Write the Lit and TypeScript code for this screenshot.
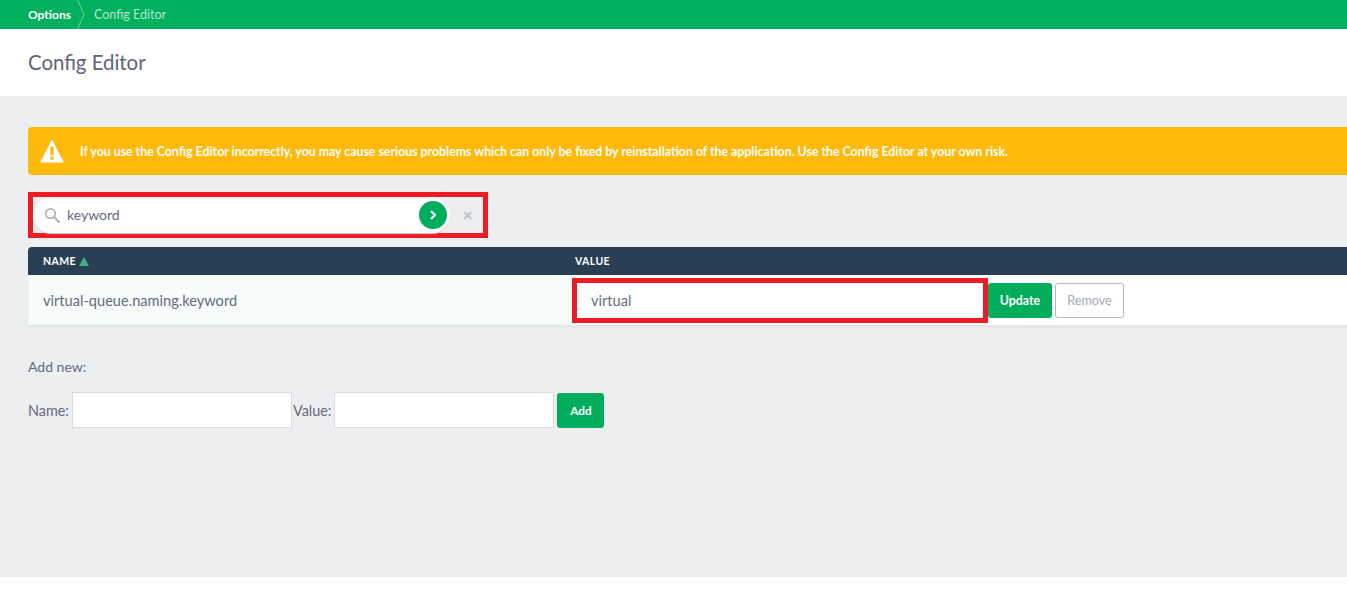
import { LitElement, html, css } from "lit";
import { customElement } from "lit/decorators.js";

@customElement("app-root")
export class AppRoot extends LitElement {
  static styles = css`
    :host { display: block; width: 1347px; height: 602px; overflow: hidden; background: #fff;
      font-family: "Lato", "Noto Sans", sans-serif; color: #676a7f; font-size: 14px; }
    * { box-sizing: border-box; }
    .crumbs { height: 29px; background: #00b05e; display: flex; align-items: center; padding-left: 28px; font-size: 12px; }
    .crumb-active { color: #fff; font-weight: 700; }
    .chev { margin: 0 9px 0 6px; display: block; }
    .crumb { color: #b5e6cb; font-size: 12.5px; }
    .head { height: 67px; display: flex; align-items: center; padding: 0 28px 1px; }
    h1 { margin: 0; font-size: 20.4px; font-weight: 400; color: #5f6478; }
    .body { height: 481px; background: #edeef0; padding: 31px 0 0 28px; }
    .warn { width: 1340px; height: 48px; background: #ffb90a; border-radius: 4px; display: flex; align-items: center;
      padding-left: 12px; color: #fff; font-weight: 700; font-size: 12.33px; gap: 16px; }
    .search-frame { margin-top: 17px; width: 460px; height: 46px; border: 5px solid #ed1c24; display: flex; align-items: center; }
    .search { width: 417px; height: 35px; background: #fff; border-radius: 18px; box-shadow: 0 1px 1px #cfd3d9;
      display: flex; align-items: center; padding: 0 3px 0 11px; font-size: 14px; }
    .search .text { margin-left: 7px; flex: 1; color: #66697f; padding-bottom: 2px; }
    .go { width: 28px; height: 28px; border-radius: 50%; background: #00ad5c; display: flex; align-items: center; justify-content: center; }
    .clear { margin-left: 13px; display: block; }
    .table { margin-top: 9px; width: 1340px; }
    .thead { height: 28px; background: #2a3f54; border-radius: 4px 0 0 0; color: #fff; font-size: 10.5px; font-weight: 700;
      letter-spacing: 0.4px; display: flex; align-items: center; }
    .col-name { width: 544px; padding-left: 15px; display: flex; align-items: center; gap: 3px; }
    .col-val { padding-left: 3px; }
    .row { height: 51px; background: #fff; border-bottom: 1px solid #e2e4e8; box-shadow: 0 1px 2px rgba(0,0,0,.05); display: flex; align-items: center; }
    .name { width: 544px; height: 100%; background: #f5fcf9; padding: 1px 0 0 15px; display: flex; align-items: center; font-size: 14.6px; }
    .val-frame { width: 416px; height: 45px; border: 5px solid #ed1c24; background: #fff; display: flex; align-items: center; padding-left: 14px; font-size: 14.6px; }
    .btn { height: 35px; border-radius: 3px; display: flex; align-items: center; justify-content: center; font-size: 12.4px; font-weight: 700; }
    .primary { background: #00ad5c; color: #fff; }
    .update { width: 64px; }
    .remove { width: 69px; margin-left: 3px; background: #fff; color: #a4a9b5; border: 1px solid #b4b8c2; font-weight: 400; font-size: 12.6px; }
    .add-title { margin-top: 32px; font-size: 14px; line-height: 17px; }
    .form { margin-top: 17px; display: flex; align-items: center; font-size: 14.4px; }
    .field { width: 220px; height: 36px; background: #fff; border: 1px solid #d9dce1; margin-left: 3px; margin-right: 1px; }
    .add { width: 47px; margin-left: 2px; font-size: 11.8px; }
  `;

  render() {
    return html`
      <div class="crumbs">
        <span class="crumb-active">Options</span>
        <svg class="chev" width="8" height="29" viewBox="0 0 8 29"><path d="M0.5 0 L7 14.5 L0.5 29" fill="none" stroke="#6fd09f" stroke-width="1"/></svg>
        <span class="crumb">Config Editor</span>
      </div>
      <div class="head"><h1>Config Editor</h1></div>
      <div class="body">
        <div class="warn">
          <svg width="24" height="24" viewBox="0 0 24 24"><path d="M12 0.5 L24 23.5 L0 23.5 Z" fill="#fff"/><rect x="10.4" y="7.5" width="3.2" height="8.5" fill="#ffb90a"/><rect x="10.4" y="17.5" width="3.2" height="3.2" fill="#ffb90a"/></svg>
          <span>If you use the Config Editor incorrectly, you may cause serious problems which can only be fixed by reinstallation of the application. Use the Config Editor at your own risk.</span>
        </div>
        <div class="search-frame">
          <div class="search">
            <svg width="16" height="16" viewBox="0 0 16 16"><circle cx="6.5" cy="6.5" r="4.7" fill="none" stroke="#b4b6bb" stroke-width="1.8"/><path d="M10 10 L15 15" stroke="#b4b6bb" stroke-width="2.2" stroke-linecap="round"/></svg>
            <span class="text">keyword</span>
            <div class="go"><svg width="10" height="12" viewBox="0 0 10 12"><path d="M3 2 L7 6 L3 10" fill="none" stroke="#fff" stroke-width="2"/></svg></div>
          </div>
          <svg class="clear" width="9" height="9" viewBox="0 0 9 9"><path d="M1 1 L8 8 M8 1 L1 8" stroke="#c2c5cc" stroke-width="2.4"/></svg>
        </div>
        <div class="table">
          <div class="thead">
            <div class="col-name">NAME <svg width="10" height="9" viewBox="0 0 10 9"><path d="M5 0 L10 9 L0 9 Z" fill="#3fb27f"/></svg></div>
            <div class="col-val">VALUE</div>
          </div>
          <div class="row">
            <div class="name">virtual-queue.naming.keyword</div>
            <div class="val-frame">virtual</div>
            <div class="btn primary update">Update</div>
            <div class="btn remove">Remove</div>
          </div>
        </div>
        <div class="add-title">Add new:</div>
        <div class="form">
          <span>Name:</span><div class="field"></div>
          <span>Value:</span><div class="field"></div>
          <div class="btn primary add">Add</div>
        </div>
      </div>
    `;
  }
}
